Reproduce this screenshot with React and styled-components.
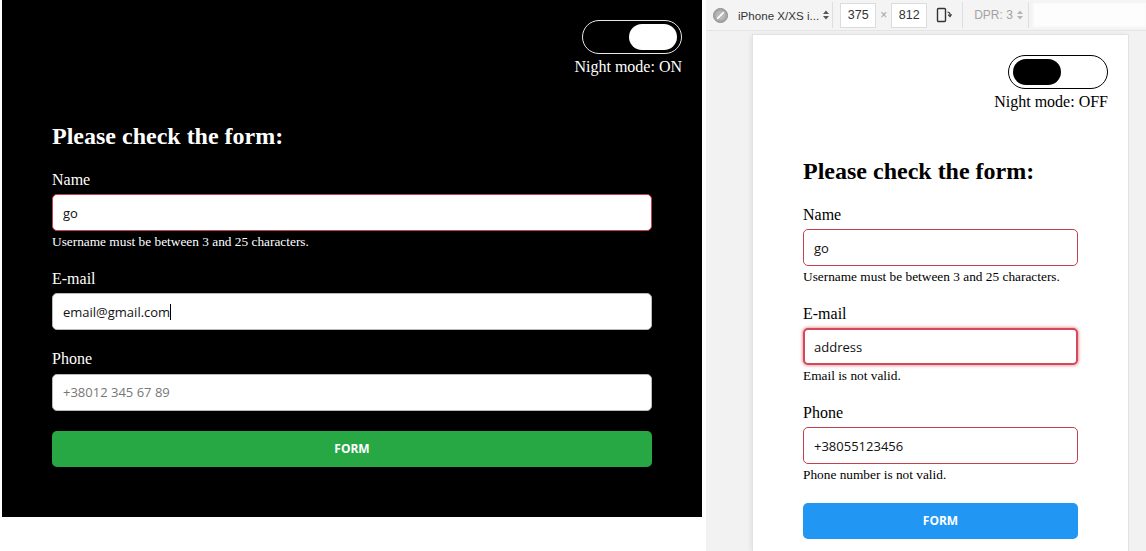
import React from "react";
import styled, { createGlobalStyle, css } from "styled-components";

const GlobalStyle = createGlobalStyle`
  html, body { margin: 0; padding: 0; background: #fff; overflow: hidden; }
  body { font-family: "Liberation Serif", "Times New Roman", serif; }
  * { box-sizing: border-box; }
`;

const Screen = styled.div`
  display: flex;
  width: 1146px;
  height: 551px;
  overflow: hidden;
`;

const DesktopPane = styled.div`
  width: 706px;
  flex-shrink: 0;
  padding-left: 2px;
  background: #fff;
`;

const AppSurface = styled.div`
  width: ${(p) => p.$width}px;
  background: ${(p) => (p.$dark ? "#000" : "#fff")};
  color: ${(p) => (p.$dark ? "#fff" : "#000")};
  font-family: "Liberation Serif", "Times New Roman", serif;
`;

const ToggleArea = styled.div`
  display: flex;
  flex-direction: column;
  align-items: flex-end;
  padding: 20px 20px 0;
`;

const ToggleTrack = styled.button`
  width: 100px;
  height: 34px;
  padding: 0 4px;
  border-radius: 17px;
  border: 1px solid ${(p) => (p.$on ? "#e8e8e8" : "#000")};
  background: ${(p) => (p.$on ? "#000" : "#fff")};
  display: flex;
  align-items: center;
  justify-content: ${(p) => (p.$on ? "flex-end" : "flex-start")};
  cursor: pointer;
`;

const ToggleKnob = styled.span`
  width: 48px;
  height: 26px;
  border-radius: 13px;
  background: ${(p) => (p.$on ? "#fff" : "#000")};
`;

const ToggleLabel = styled.div`
  margin-top: 4px;
  font-size: 16px;
  line-height: 18.4px;
`;

const Form = styled.form`
  padding: 0 50px 50px;
`;

const Heading = styled.h2`
  margin: 47px 0 20px;
  font-size: 24px;
  line-height: 27.6px;
  font-weight: bold;
`;

const Field = styled.div`
  margin-bottom: 20px;
`;

const Label = styled.label`
  display: block;
  font-size: 16px;
  line-height: 18.4px;
  margin-bottom: 5px;
`;

const InputWrap = styled.div`
  position: relative;
`;

const Input = styled.input`
  display: block;
  width: 100%;
  height: 37px;
  padding: 0 10px;
  border-radius: 5px;
  border: 1px solid ${(p) => (p.$invalid ? "#c4404f" : "#b8b8b8")};
  background: #fff;
  color: #111;
  font-family: "Open Sans", "Noto Sans", sans-serif;
  font-size: 13px;
  outline: none;
  ${(p) =>
    p.$glow &&
    css`
      border: 2px solid #d24a57;
      padding: 0 9px;
      box-shadow: 0 0 3px 1px rgba(214, 80, 92, 0.55);
    `}
  &::placeholder {
    color: #777;
  }
`;

const CaretLayer = styled.div`
  position: absolute;
  inset: 0;
  padding: 0 11px;
  display: flex;
  align-items: center;
  pointer-events: none;
  font-family: "Open Sans", "Noto Sans", sans-serif;
  font-size: 13px;
  white-space: pre;
`;

const Ghost = styled.span`
  visibility: hidden;
`;

const Caret = styled.span`
  width: 1px;
  height: 16px;
  background: #000;
`;

const ErrorText = styled.div`
  margin-top: 4px;
  font-size: 13.33px;
  line-height: 14.5px;
`;

const SubmitButton = styled.button`
  display: block;
  width: 100%;
  height: 36px;
  border: none;
  border-radius: 5px;
  background: ${(p) => p.$color};
  color: #fff;
  font-family: "Open Sans", "Noto Sans", sans-serif;
  font-weight: 700;
  font-size: 12px;
  cursor: pointer;
`;

/* ---------- devtools pane ---------- */

const DevPane = styled.div`
  flex: 1;
  display: flex;
  flex-direction: column;
  background: #f2f2f3;
  min-width: 0;
`;

const Toolbar = styled.div`
  height: 31px;
  flex-shrink: 0;
  display: flex;
  align-items: center;
  padding-left: 7px;
  background: #f4f4f4;
  border-bottom: 1px solid #e4e4e4;
  font-family: "Liberation Sans", Arial, sans-serif;
  font-size: 12px;
  color: #333;
  white-space: nowrap;
  overflow: hidden;
`;

const ToolText = styled.span`
  display: inline-block;
  color: ${(p) => (p.$muted ? "#a3a3a3" : "#333")};
  margin-left: ${(p) => p.$ml || 0}px;
  width: ${(p) => (p.$w ? `${p.$w}px` : "auto")};
  font-size: ${(p) => p.$fs || 12}px;
`;

const Divider = styled.span`
  width: 1px;
  height: 26px;
  background: #dedede;
  margin-left: ${(p) => p.$ml || 0}px;
`;

const DimBox = styled.span`
  width: 36px;
  height: 25px;
  margin-left: ${(p) => p.$ml || 0}px;
  display: flex;
  align-items: center;
  justify-content: center;
  background: #fff;
  border: 1px solid #dcdcdc;
  color: #333;
  font-size: 12.5px;
`;

const IconSlot = styled.span`
  display: flex;
  margin-left: ${(p) => p.$ml || 0}px;
`;

const Redacted = styled.span`
  flex: 1;
  height: 24px;
  margin-left: 4px;
  background: #fdfdfd;
  filter: blur(1px);
`;

const Viewport = styled.div`
  flex: 1;
  padding: 4px 0 0 47px;
  overflow: hidden;
`;

const DeviceFrame = styled.div`
  width: 375px;
  height: 100%;
  background: #fff;
  box-shadow: 0 0 0 1px #e2e2e2, -2px 0 5px rgba(0, 0, 0, 0.08);
`;

const SpinArrows = ({ color = "#555" }) => (
  <svg width="6" height="10" viewBox="0 0 6 10">
    <path d="M0 4 L3 0.5 L6 4 Z M0 6 L3 9.5 L6 6 Z" fill={color} />
  </svg>
);

const DisabledIcon = () => (
  <svg width="15" height="15" viewBox="0 0 15 15">
    <circle cx="7.5" cy="7.5" r="7" fill="#a8a8a8" stroke="#8e8e8e" />
    <circle cx="7.5" cy="7.5" r="4.6" fill="#b9b9b9" />
    <path d="M4.6 10.4 L10.4 4.6" stroke="#fff" strokeWidth="1.6" strokeLinecap="round" />
  </svg>
);

const RotateIcon = () => (
  <svg width="16" height="16" viewBox="0 0 16 16">
    <rect x="1.5" y="1.5" width="8" height="13" rx="1" fill="none" stroke="#333" strokeWidth="1.4" />
    <path d="M11.5 5 Q14.5 5.5 14 8.5" fill="none" stroke="#333" strokeWidth="1.2" />
    <path d="M12.2 7.6 L14 9.6 L15.6 7.4" fill="none" stroke="#333" strokeWidth="1.2" />
  </svg>
);

function NightToggle({ on }) {
  return (
    <ToggleArea>
      <ToggleTrack type="button" $on={on} aria-pressed={on}>
        <ToggleKnob $on={on} />
      </ToggleTrack>
      <ToggleLabel>Night mode: {on ? "ON" : "OFF"}</ToggleLabel>
    </ToggleArea>
  );
}

function FormField({ label, value, placeholder, error, invalid, glow, caret }) {
  return (
    <Field>
      <Label>{label}</Label>
      <InputWrap>
        <Input
          readOnly
          value={value}
          placeholder={placeholder}
          $invalid={invalid}
          $glow={glow}
        />
        {caret && (
          <CaretLayer aria-hidden="true">
            <Ghost>{value}</Ghost>
            <Caret />
          </CaretLayer>
        )}
      </InputWrap>
      <ErrorText>{error}</ErrorText>
    </Field>
  );
}

function CheckForm({ dark, width, fields, buttonColor }) {
  return (
    <AppSurface $dark={dark} $width={width}>
      <NightToggle on={dark} />
      <Form onSubmit={(e) => e.preventDefault()}>
        <Heading>Please check the form:</Heading>
        {fields.map((f) => (
          <FormField key={f.label} {...f} />
        ))}
        <SubmitButton type="submit" $color={buttonColor}>
          FORM
        </SubmitButton>
      </Form>
    </AppSurface>
  );
}

const darkFields = [
  {
    label: "Name",
    value: "go",
    invalid: true,
    error: "Username must be between 3 and 25 characters.",
  },
  { label: "E-mail", value: "email@gmail.com", caret: true },
  { label: "Phone", value: "", placeholder: "+38012 345 67 89" },
];

const lightFields = [
  {
    label: "Name",
    value: "go",
    invalid: true,
    error: "Username must be between 3 and 25 characters.",
  },
  {
    label: "E-mail",
    value: "address",
    invalid: true,
    glow: true,
    error: "Email is not valid.",
  },
  {
    label: "Phone",
    value: "+38055123456",
    invalid: true,
    error: "Phone number is not valid.",
  },
];

export default function App() {
  return (
    <>
      <GlobalStyle />
      <Screen>
        <DesktopPane>
          <CheckForm dark width={700} fields={darkFields} buttonColor="#28a745" />
        </DesktopPane>
        <DevPane>
          <Toolbar>
            <DisabledIcon />
            <ToolText $ml={10} $fs={11.6}>iPhone X/XS i...</ToolText>
            <IconSlot $ml={4}>
              <SpinArrows />
            </IconSlot>
            <Divider $ml={3} />
            <DimBox $ml={7}>375</DimBox>
            <ToolText $muted $ml={4} $w={11}>×</ToolText>
            <DimBox>812</DimBox>
            <IconSlot $ml={9}>
              <RotateIcon />
            </IconSlot>
            <Divider $ml={10} />
            <ToolText $muted $ml={11} $w={38}>DPR: 3</ToolText>
            <IconSlot $ml={5}>
              <SpinArrows color="#b5b5b5" />
            </IconSlot>
            <Divider $ml={5} />
            <Redacted />
          </Toolbar>
          <Viewport>
            <DeviceFrame>
              <CheckForm width={375} fields={lightFields} buttonColor="#2196f3" />
            </DeviceFrame>
          </Viewport>
        </DevPane>
      </Screen>
    </>
  );
}
